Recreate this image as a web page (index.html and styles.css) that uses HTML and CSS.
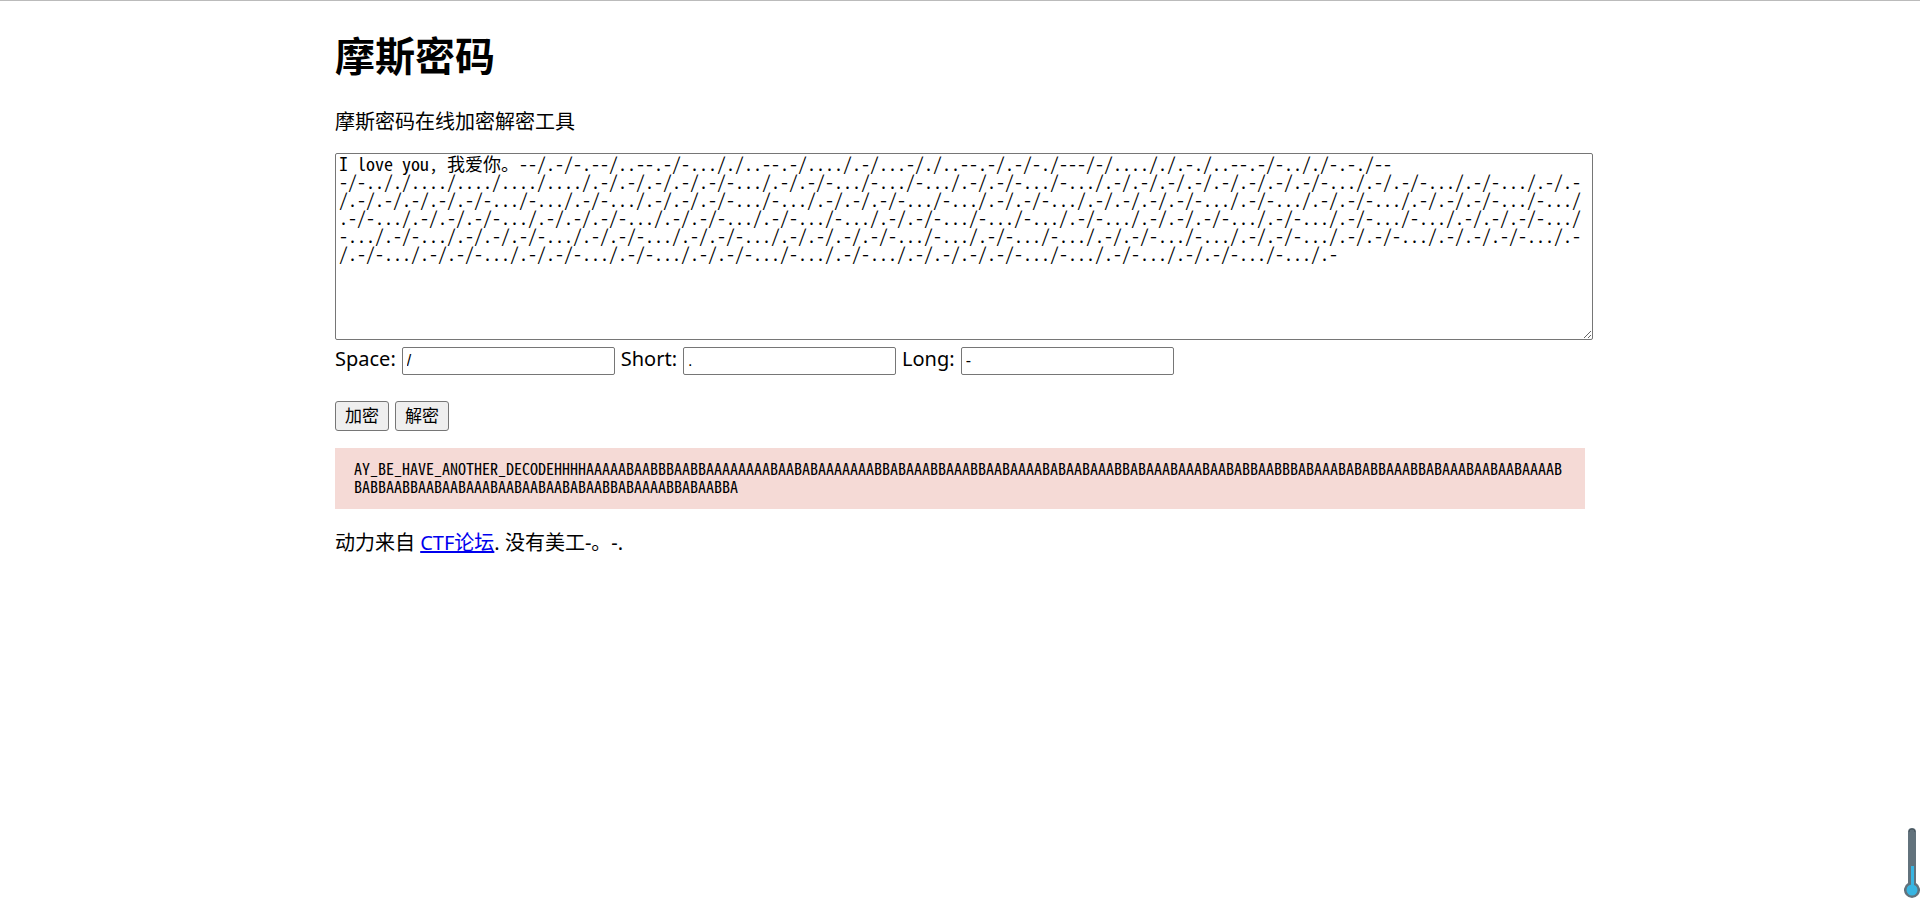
FILE: index.html
```html
<!DOCTYPE html>
<html lang="zh-CN">

<head>
    <meta charset="UTF-8">
    <meta name="viewport" content="width=device-width, initial-scale=1.0">
    <title>摩斯密码</title>
    <link rel="stylesheet" href="styles.css">
</head>

<body>
    <div class="container">
        <h1>摩斯密码</h1>
        <p>摩斯密码在线加密解密工具</p>

        <textarea id="text" aria-label="摩斯密码" spellcheck="false"></textarea>

        <div class="options">
            <label for="space">Space:</label>
            <input type="text" id="space" value="/">
            <label for="short">Short:</label>
            <input type="text" id="short" value=".">
            <label for="long">Long:</label>
            <input type="text" id="long" value="-">
        </div>

        <div class="buttons">
            <button type="button" id="encodeBtn">加密</button>
            <button type="button" id="decodeBtn">解密</button>
        </div>

        <pre class="output" id="output">AY_BE_HAVE_ANOTHER_DECODEHHHHAAAAABAABBBAABBAAAAAAAABAABABAAAAAAABBABAAABBAAABBAABAAAABABAABAAABBABAAABAAABAABABBAABBBABAAABABABBAAABBABAAABAABAABAAAABBABBAABBAABAABAAABAABAABAABABAABBABAAAABBABAABBA</pre>

        <p class="footer">动力来自 <a href="#">CTF论坛</a>. 没有美工-。-.</p>
    </div>

    <svg class="thermometer" width="16" height="72" viewBox="0 0 16 72" aria-hidden="true">
        <path d="M4 56V5a4 4 0 0 1 8 0v51a8 8 0 1 1-8 0z" fill="#62727c"/>
        <path d="M5 5a3 3 0 0 1 6 0" fill="none" stroke="#46535c"/>
        <circle cx="8" cy="63" r="5.5" fill="#38b5e2"/>
        <path d="M7 39h3v20H7z" fill="#38b5e2"/>
    </svg>

    <script>
        const codes = {
            A: '.-', B: '-...', C: '-.-.', D: '-..', E: '.', F: '..-.', G: '--.',
            H: '....', I: '..', J: '.---', K: '-.-', L: '.-..', M: '--', N: '-.',
            O: '---', P: '.--.', Q: '--.-', R: '.-.', S: '...', T: '-', U: '..-',
            V: '...-', W: '.--', X: '-..-', Y: '-.--', Z: '--..', _: '..--.-',
            0: '-----', 1: '.----', 2: '..---', 3: '...--', 4: '....-',
            5: '.....', 6: '-....', 7: '--...', 8: '---..', 9: '----.'
        };
        const text = document.getElementById('text');
        const output = document.getElementById('output');

        function getOption(id) {
            return document.getElementById(id).value;
        }

        function encode(value) {
            return value.toUpperCase().split('').filter(c => codes[c]).map(function (c) {
                return codes[c].split('').map(s => s === '.' ? getOption('short') : getOption('long')).join('');
            }).join(getOption('space'));
        }

        function decode(value) {
            return value.replace(/\n/g, '').split(getOption('space')).map(function (part) {
                const code = part.split(getOption('short')).join('.').split(getOption('long')).join('-');
                return Object.keys(codes).find(c => codes[c] === code) || '';
            }).join('');
        }

        // Sample text, with a line break in the middle of the letter O
        text.value = 'I love you, 我爱你。' + encode('MAY_BE_HAVE_ANOTHER_DEC') +
            '/--\n-/' + encode(output.textContent.slice(23));

        document.getElementById('encodeBtn').addEventListener('click', function () {
            output.textContent = encode(text.value);
        });

        document.getElementById('decodeBtn').addEventListener('click', function () {
            output.textContent = decode(text.value);
        });
    </script>
</body>

</html>
```
FILE: styles.css
```css
body {
    margin: 0;
    border-top: 1px solid #bbb;
    font-family: "Noto Sans", "Noto Sans CJK SC", sans-serif;
    font-size: 20px;
    line-height: 28px;
    color: #000;
    background-color: #fff;
}

.container {
    max-width: 1250px;
    margin: 0 auto;
}

h1 {
    margin: 28px 0 25px;
    font-size: 40px;
    line-height: 54px;
}

p {
    margin: 0 0 17px;
}

textarea {
    display: block;
    width: 100%;
    height: 185px;
    padding: 0 3px;
    border: 1px solid #767676;
    border-radius: 2px;
    font-family: "Noto Sans Mono CJK SC", "Liberation Mono", monospace;
    font-size: 18px;
    line-height: 18px;
    line-break: anywhere;
    resize: both;
}

.options {
    display: flex;
    flex-wrap: wrap;
    gap: 6px;
    margin-top: 7px;
    line-height: 24px;
}

.options input {
    box-sizing: border-box;
    width: 213px;
    height: 28px;
    padding: 2px 4px;
    border: 1px solid #767676;
    border-radius: 2px;
    font-family: "Liberation Sans", sans-serif;
    font-size: 16px;
}

.buttons {
    display: flex;
    gap: 6px;
    margin-top: 26px;
}

button {
    height: 30px;
    padding: 0 9px;
    border: 1px solid #767676;
    border-radius: 3px;
    background-color: #efefef;
    color: #000;
    font-family: "Noto Sans", "Noto Sans CJK SC", sans-serif;
    font-size: 17px;
    line-height: 26px;
}

.output {
    margin: 17px 0 20px;
    padding: 11px 19px 14px;
    background-color: #f5dad6;
    font-family: "Noto Sans Mono CJK SC", "Liberation Mono", monospace;
    font-size: 16px;
    line-height: 18px;
    white-space: pre-wrap;
    word-break: break-all;
}

a {
    color: #0000ee;
}

.thermometer {
    position: fixed;
    right: 0;
    bottom: 3px;
}
```
